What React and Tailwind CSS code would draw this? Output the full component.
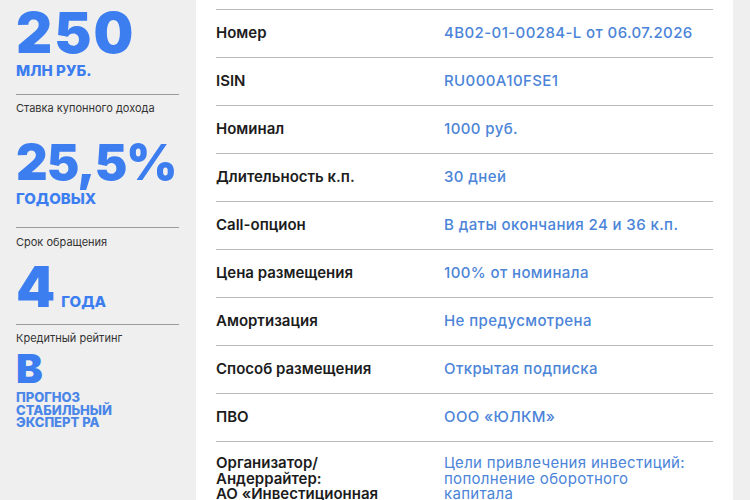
const rows = [
  ['Номер', '4B02-01-00284-L от 06.07.2026'],
  ['ISIN', 'RU000A10FSE1'],
  ['Номинал', '1000 руб.'],
  ['Длительность к.п.', '30 дней'],
  ['Call-опцион', 'В даты окончания 24 и 36 к.п.'],
  ['Цена размещения', '100% от номинала'],
  ['Амортизация', 'Не предусмотрена'],
  ['Способ размещения', 'Открытая подписка'],
  ['ПВО', 'ООО «ЮЛКМ»'],
]

function Caption({ children }) {
  return <div className="text-[11px] leading-none text-[#333]">{children}</div>
}

function Rule() {
  return <div className="h-px bg-[#9a9a9a]" />
}

export default function App() {
  return (
    <div
      className="w-[750px] h-[500px] overflow-hidden bg-[#efefef] flex"
      style={{ fontFamily: 'Inter, "Noto Sans", sans-serif' }}
    >
      {/* Left summary column */}
      <aside className="w-[196px] shrink-0 pl-4 pr-[17px] text-[#3c7ef0]">
        <div className="pt-[5px] text-[56px] font-black leading-none tracking-[2px]">250</div>
        <div className="mt-[2px] text-[15px] font-extrabold leading-none">МЛН РУБ.</div>
        <div className="mt-[16px]"><Rule /></div>
        <div className="mt-[8px]"><Caption>Ставка купонного дохода</Caption></div>

        <div className="mt-[24px] text-[49px] font-black leading-none tracking-[-1px]">25,5%</div>
        <div className="mt-[4px] text-[15px] font-extrabold leading-none">ГОДОВЫХ</div>
        <div className="mt-[21px]"><Rule /></div>
        <div className="mt-[9px]"><Caption>Срок обращения</Caption></div>

        <div className="mt-[11px] flex items-baseline gap-[6px]">
          <span className="text-[56px] font-black leading-none">4</span>
          <span className="text-[15px] font-extrabold leading-none">ГОДА</span>
        </div>
        <div className="mt-[9px]"><Rule /></div>
        <div className="mt-[8px]"><Caption>Кредитный рейтинг</Caption></div>

        <div className="mt-[5px] text-[40px] font-black leading-none">B</div>
        <div className="mt-[2px] text-[13px] font-extrabold leading-[12.5px] text-[#4a86e8]">
          <div>ПРОГНОЗ</div>
          <div>СТАБИЛЬНЫЙ</div>
          <div>ЭКСПЕРТ РА</div>
        </div>
      </aside>

      {/* Parameters card */}
      <main className="w-[537px] shrink-0 bg-white px-5 pt-[9px]">
        {rows.map(([label, value]) => (
          <div key={label} className="border-t border-[#b9b9b9] h-[48px] flex items-center text-[15px]">
            <div className="w-[228px] shrink-0 font-semibold text-[#1c1c1c]">{label}</div>
            <div className="font-medium tracking-[0.4px] text-[#4b84d8]">{value}</div>
          </div>
        ))}
        <div className="border-t border-[#b9b9b9] pt-[13px] flex text-[15px] leading-[15.5px]">
          <div className="w-[228px] shrink-0 font-semibold text-[#1c1c1c]">
            Организатор/
            <br />
            Андеррайтер:
            <br />
            АО «Инвестиционная
          </div>
          <div className="tracking-[0.3px] text-[#4b84d8]">
            Цели привлечения инвестиций:
            <br />
            пополнение оборотного
            <br />
            капитала
          </div>
        </div>
      </main>
    </div>
  )
}
